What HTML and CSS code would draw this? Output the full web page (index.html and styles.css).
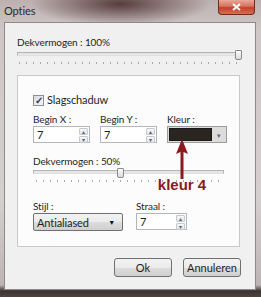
FILE: index.html
```html
<!DOCTYPE html>
<html lang="nl">
<head>
    <meta charset="UTF-8">
    <title>Opties</title>
    <link rel="stylesheet" href="styles.css">
</head>
<body>
    <div class="window">
        <div class="titlebar">
            <span class="title">Opties</span>
            <span class="close">
                <svg width="9" height="8" viewBox="0 0 9 8">
                    <path d="M1 1 L8 7 M8 1 L1 7" stroke="#fff" stroke-width="2"/>
                </svg>
            </span>
        </div>
        <div class="client">
            <div class="label">Dekvermogen : 100%</div>
            <div class="slider wide">
                <div class="track"></div>
                <div class="thumb" style="left: 218px"></div>
            </div>
            <div class="ticks wide-ticks"></div>

            <div class="panel">
                <label class="check">
                    <span class="box">&#x2713;</span>
                    Slagschaduw
                </label>

                <div class="row">
                    <div class="field">
                        <div class="label">Begin X :</div>
                        <div class="spin small">
                            <span class="value">7</span>
                            <span class="arrows"><span>&#x25B4;</span><span>&#x25BE;</span></span>
                        </div>
                    </div>
                    <div class="field">
                        <div class="label">Begin Y :</div>
                        <div class="spin small">
                            <span class="value">7</span>
                            <span class="arrows"><span>&#x25B4;</span><span>&#x25BE;</span></span>
                        </div>
                    </div>
                    <div class="field">
                        <div class="label">Kleur :</div>
                        <div class="color">
                            <span class="swatch"></span>
                            <span class="drop">&#x25BE;</span>
                        </div>
                    </div>
                </div>

                <div class="label opacity">Dekvermogen : 50%</div>
                <div class="slider narrow">
                    <div class="track"></div>
                    <div class="thumb" style="left: 84px"></div>
                </div>
                <div class="ticks narrow-ticks"></div>

                <div class="row bottom-row">
                    <div class="field">
                        <div class="label">Stijl :</div>
                        <div class="combo">
                            <span>Antialiased</span>
                            <span class="tri">&#x25BC;</span>
                        </div>
                    </div>
                    <div class="field">
                        <div class="label">Straal :</div>
                        <div class="spin radius">
                            <span class="value">7</span>
                            <span class="arrows"><span>&#x25B4;</span><span>&#x25BE;</span></span>
                        </div>
                    </div>
                </div>

                <!-- annotation drawn over the dialog -->
                <div class="note">
                    <svg width="16" height="40" viewBox="0 0 16 40">
                        <path d="M8 0 L14 15 L9.5 13 L9.5 40 L6.5 40 L6.5 13 L2 15 Z" fill="#8a1a1e"/>
                    </svg>
                    <span class="note-text">kleur 4</span>
                </div>
            </div>

            <div class="buttons">
                <button>Ok</button>
                <button>Annuleren</button>
            </div>
        </div>
    </div>
</body>
</html>
```

FILE: styles.css
```css
body {
    margin: 0;
    font-family: Lato, "Open Sans", sans-serif;
    font-size: 10px;
    letter-spacing: -0.1px;
    line-height: 13px;
    color: #1e1e1e;
}
.window {
    width: 261px;
    height: 297px;
    box-sizing: border-box;
    padding: 0 5px 7px 4px;
    background:
        radial-gradient(ellipse 90px 22px at 120px 4px, rgba(70, 40, 40, 0.85), rgba(70, 40, 40, 0) 100%),
        linear-gradient(to bottom, #bdb0b0 0, #cfc7c7 30px, #d6cfcf 200px, #bdb5b5 285px, #3b3232 291px, #4d4444 297px);
    display: flex;
    flex-direction: column;
}
.titlebar {
    height: 22px;
    display: flex;
    align-items: flex-start;
    justify-content: space-between;
}
.title {
    margin-top: 4px;
    font-size: 11px;
    color: #2a2a2a;
}
.close {
    width: 37px;
    height: 15px;
    margin-right: 1px;
    box-sizing: border-box;
    border: 1px solid #6e2b22;
    border-top: none;
    border-radius: 0 0 4px 4px;
    background: linear-gradient(to bottom, #e9a898 0, #d9705c 45%, #c0402a 55%, #d97050 100%);
    display: flex;
    align-items: center;
    justify-content: center;
}
.client {
    flex: 1;
    background: #f0f0f0;
    border: 1px solid #8f8a8a;
    padding: 0 15px 0 12px;
}
.client > .label {
    margin-top: 13px;
}
.slider {
    position: relative;
    height: 9px;
}
.slider .track {
    position: absolute;
    left: 0;
    right: 0;
    top: 2px;
    height: 4px;
    background: #e6e6e6;
    border: 1px solid #b4b4b4;
    border-bottom-color: #e0e0e0;
    box-sizing: border-box;
}
.slider .thumb {
    position: absolute;
    top: 0;
    width: 5px;
    height: 8px;
    border: 1px solid #8a8a8a;
    border-radius: 1px 1px 2px 2px;
    background: linear-gradient(to bottom, #fafafa, #dcdcdc);
}
.slider.wide {
    margin-top: 1px;
    width: 223px;
}
.ticks {
    height: 2px;
    margin-top: 3px;
    background: repeating-linear-gradient(to right, #a8a8a8 0, #a8a8a8 1px, transparent 1px, transparent 7px);
}
.wide-ticks {
    width: 220px;
    margin-left: 2px;
}
.panel {
    position: relative;
    margin-top: 11px;
    width: 223px;
    height: 172px;
    box-sizing: border-box;
    background: #fcfcfc;
    border: 1px solid #c9c9c9;
    padding: 18px 16px 0 15px;
}
.check {
    display: flex;
    align-items: center;
    gap: 3px;
    font-size: 11px;
    line-height: 12px;
}
.box {
    width: 9px;
    height: 9px;
    border: 1px solid #8e8f8f;
    background: linear-gradient(to bottom right, #dcdcdc, #f6f6f6);
    color: #2b3a6a;
    font-size: 10px;
    line-height: 9px;
    text-align: center;
    font-weight: bold;
}
.row {
    display: flex;
    margin-top: 7px;
}
.field {
    display: flex;
    flex-direction: column;
}
.field + .field {
    margin-left: 10px;
}
.spin {
    height: 17px;
    box-sizing: border-box;
    border: 1px solid #b2b6bf;
    background: #fff;
    display: flex;
    justify-content: space-between;
    align-items: stretch;
    padding: 1px;
}
.spin.small {
    width: 57px;
}
.spin.radius {
    width: 51px;
}
.value {
    padding-left: 2px;
    font-size: 11px;
    line-height: 14px;
}
.arrows {
    width: 9px;
    display: flex;
    flex-direction: column;
    gap: 1px;
}
.arrows span {
    flex: 1;
    border: 1px solid #c6c9cf;
    border-radius: 1px;
    background: linear-gradient(to bottom, #f8f8f8, #e2e4e8);
    color: #5c6470;
    font-size: 6px;
    line-height: 5px;
    text-align: center;
}
.color {
    width: 60px;
    height: 17px;
    box-sizing: border-box;
    border: 1px solid #9c9c9c;
    background: #dcdcdc;
    display: flex;
    padding: 1px;
}
.swatch {
    flex: 1;
    background: #2a2521;
    border: 1px solid #1a1a1a;
}
.drop {
    width: 13px;
    color: #666;
    font-size: 7px;
    line-height: 14px;
    text-align: center;
}
.opacity {
    margin-top: 12px;
}
.slider.narrow {
    width: 191px;
}
.narrow-ticks {
    width: 185px;
    margin-left: 3px;
}
.bottom-row {
    margin-top: 18px;
}
.bottom-row .field + .field {
    margin-left: 13px;
}
.combo {
    width: 90px;
    height: 18px;
    box-sizing: border-box;
    border: 1px solid #707070;
    border-radius: 2px;
    background: linear-gradient(to bottom, #f2f2f2 0, #ebebeb 50%, #dddddd 51%, #cfcfcf 100%);
    display: flex;
    justify-content: space-between;
    align-items: center;
    padding: 0 7px 0 3px;
    font-size: 11px;
}
.tri {
    font-size: 7px;
    color: #111;
}
.note {
    position: absolute;
    left: 138px;
    top: 63px;
    width: 52px;
    display: flex;
    flex-direction: column;
    align-items: center;
}
.note-text {
    margin-top: -1px;
    font-family: "Liberation Sans", Arial, sans-serif;
    font-weight: bold;
    font-size: 15px;
    letter-spacing: 0;
    line-height: 14px;
    color: #8a1a1e;
    white-space: nowrap;
}
.buttons {
    display: flex;
    justify-content: flex-end;
    gap: 11px;
    margin-top: 11px;
    margin-right: -1px;
}
button {
    width: 58px;
    height: 19px;
    border: 1px solid #707070;
    border-radius: 3px;
    background: linear-gradient(to bottom, #f2f2f2 0, #ebebeb 50%, #dddddd 51%, #cfcfcf 100%);
    font-family: Lato, "Open Sans", sans-serif;
    font-size: 11px;
    color: #1e1e1e;
    padding: 0;
}
```
